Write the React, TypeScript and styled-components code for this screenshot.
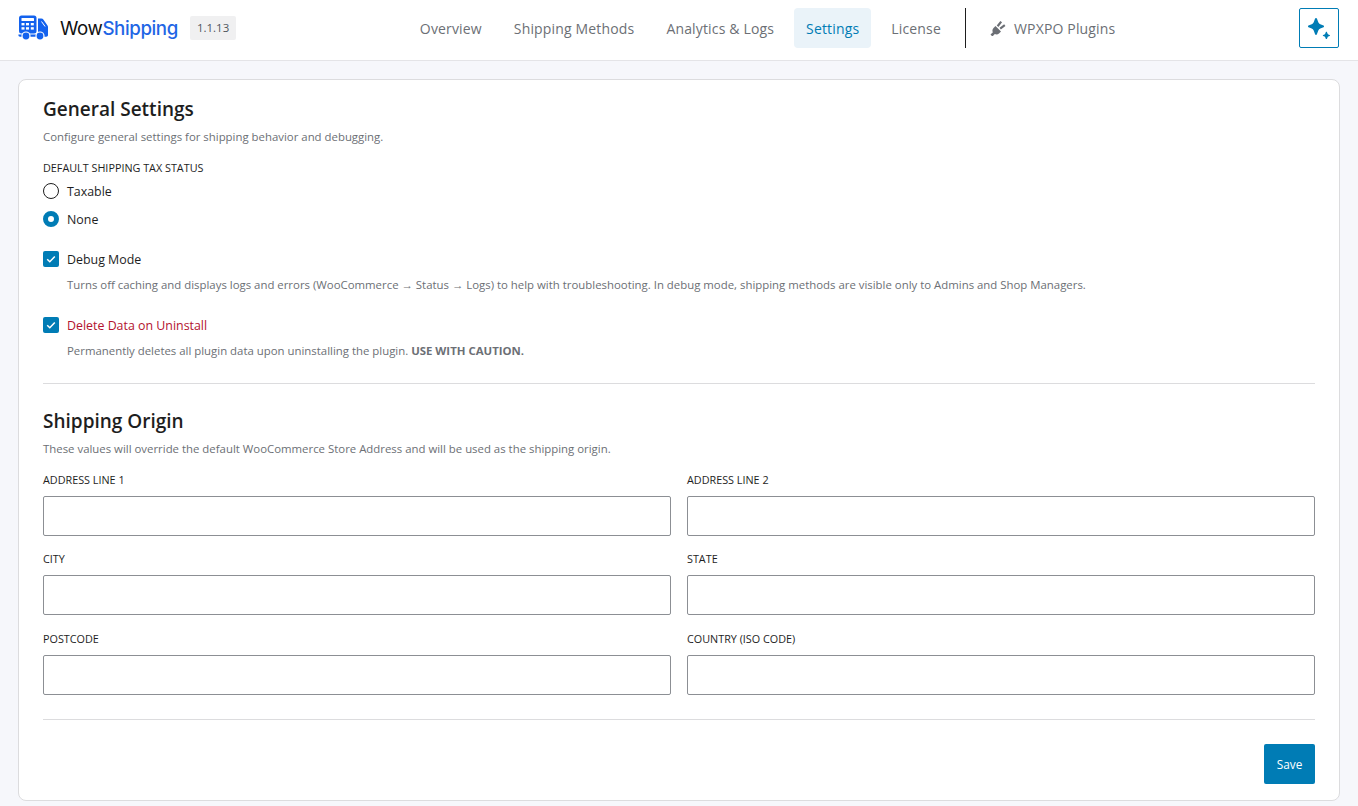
import React from 'react'
import styled, { createGlobalStyle } from 'styled-components'

const BLUE = '#007cb5'
const LOGO_BLUE = '#1362ee'

const GlobalStyle = createGlobalStyle`
  html, body {
    margin: 0;
    padding: 0;
    background: #f6f7fb;
    font-family: 'Open Sans', 'Noto Sans', sans-serif;
    color: #1e1e1e;
  }
  * {
    box-sizing: border-box;
  }
`

const Header = styled.header`
  display: flex;
  align-items: center;
  justify-content: space-between;
  height: 61px;
  padding: 8px 19px 12px 18px;
  background: #fff;
  border-bottom: 1px solid #e4e4e7;
`

const Brand = styled.div`
  display: flex;
  align-items: center;
`

const BrandName = styled.div`
  margin-left: 11px;
  font-family: Inter, sans-serif;
  font-size: 18.7px;
  font-weight: 400;
  letter-spacing: -0.4px;
  color: #111;
`

const BrandAccent = styled.span`
  color: #1f66e5;
  font-weight: 500;
`

const Version = styled.span`
  margin-left: 12px;
  padding: 0 7px;
  background: #f0f0f1;
  border-radius: 2px;
  font-size: 11.5px;
  line-height: 24px;
  color: #50575e;
`

const Nav = styled.nav`
  display: flex;
  align-items: center;
  gap: 8px;
`

const NavItem = styled.a<{ $active?: boolean }>`
  display: flex;
  align-items: center;
  gap: 8px;
  height: 40px;
  padding: 0 12px;
  border-radius: 4px;
  font-size: 14px;
  letter-spacing: 0.16px;
  color: ${p => (p.$active ? BLUE : '#6c6f75')};
  background: ${p => (p.$active ? '#eaf3f9' : 'transparent')};
`

const NavDivider = styled.div`
  width: 1px;
  height: 40px;
  margin: 0 4px;
  background: #1e1e1e;
`

const SparkleButton = styled.button`
  display: flex;
  align-items: center;
  justify-content: center;
  width: 40px;
  height: 40px;
  padding: 0;
  background: #fff;
  border: 1px solid ${BLUE};
  border-radius: 2px;
`

const Card = styled.main`
  margin: 18px 18px 0;
  padding: 17px 24px 16px;
  background: #fff;
  border: 1px solid #dcdcde;
  border-radius: 8px;
`

const SectionTitle = styled.h2`
  margin: 0;
  font-size: 19px;
  line-height: 24px;
  font-weight: 600;
  color: #1e1e1e;
`

const SectionHint = styled.p`
  margin: 8px 0 0;
  font-size: 11.4px;
  line-height: 16px;
  color: #6c6f75;
`

const FieldLabel = styled.div`
  font-size: 10.8px;
  line-height: 16px;
  font-weight: 500;
  text-transform: uppercase;
  color: #1e1e1e;
`

const TaxLabel = styled(FieldLabel)`
  margin-top: 15px;
`

const RadioRow = styled.label<{ $first?: boolean }>`
  display: flex;
  align-items: center;
  gap: 8px;
  height: 16px;
  margin-top: ${p => (p.$first ? '7px' : '12px')};
  font-size: 12.4px;
  color: #1e1e1e;
`

const RadioDot = styled.span<{ $checked?: boolean }>`
  width: 16px;
  height: 16px;
  border-radius: 50%;
  background: #fff;
  border: ${p => (p.$checked ? `5px solid ${BLUE}` : '1px solid #1e1e1e')};
`

const CheckGroup = styled.div`
  margin-top: 24px;
`

const CheckRow = styled.label<{ $danger?: boolean }>`
  display: flex;
  align-items: center;
  gap: 8px;
  height: 16px;
  font-size: 12.4px;
  color: ${p => (p.$danger ? '#b3122f' : '#1e1e1e')};
`

const CheckBox = styled.span`
  display: flex;
  align-items: center;
  justify-content: center;
  width: 16px;
  height: 16px;
  background: ${BLUE};
  border-radius: 2px;
`

const CheckHint = styled.p`
  margin: 10px 0 0 24px;
  font-size: 11.4px;
  line-height: 16px;
  color: #6c6f75;
`

const Arrow = styled.span`
  font-family: 'Liberation Sans', sans-serif;
`

const Divider = styled.hr`
  margin: 24px 0;
  border: 0;
  border-top: 1px solid #dcdcde;
`

const OriginDivider = styled(Divider)`
  margin-bottom: 25px;
`

const FieldGrid = styled.div`
  display: grid;
  grid-template-columns: 1fr 1fr;
  column-gap: 16px;
  row-gap: 15.4px;
  margin-top: 15px;
`

const Field = styled.div`
  display: flex;
  flex-direction: column;
  gap: 8px;
`

const TextInput = styled.input`
  height: 40px;
  padding: 0 12px;
  background: #fff;
  border: 1px solid #8c8f94;
  border-radius: 2px;
`

const Footer = styled.div`
  display: flex;
  justify-content: flex-end;
`

const SaveButton = styled.button`
  width: 51px;
  height: 40px;
  padding: 0;
  background: ${BLUE};
  border: 0;
  border-radius: 2px;
  font-family: inherit;
  font-size: 11.8px;
  color: #fff;
`

function TruckLogo() {
  return (
    <svg width='31' height='26' viewBox='0 0 31 26' aria-hidden='true'>
      <rect x='1' y='0.5' width='17.5' height='18' rx='2.5' fill={LOGO_BLUE} />
      <g fill='#fff'>
        <rect x='3.5' y='3' width='12.5' height='3' rx='0.6' />
        <rect x='3.5' y='8' width='3' height='2.4' />
        <rect x='8' y='8' width='3' height='2.4' />
        <rect x='12.8' y='8' width='3' height='2.4' />
        <rect x='3.5' y='12.2' width='3' height='2.4' />
        <rect x='8' y='12.2' width='3' height='2.4' />
        <rect x='12.8' y='12.2' width='3' height='2.4' />
      </g>
      <path d='M20 3.5h3.3c.9 0 1.7.4 2.2 1.2l4 5.8c.3.5.5 1 .5 1.6V20c0 1-.8 1.7-1.7 1.7H2c-1 0-1.6-.7-1.6-1.6v-.6h17.8c1 0 1.8-.8 1.8-1.8z' fill={LOGO_BLUE} />
      <path d='M23.5 6.5l3.6 5' stroke='#fff' strokeWidth='1' fill='none' />
      <circle cx='8' cy='21' r='4.6' fill='#fff' />
      <circle cx='22' cy='21' r='4.6' fill='#fff' />
      <circle cx='8' cy='21' r='3.4' fill={LOGO_BLUE} />
      <circle cx='22' cy='21' r='3.4' fill={LOGO_BLUE} />
    </svg>
  )
}

function PlugIcon() {
  return (
    <svg width='16' height='16' viewBox='0 0 16 16' aria-hidden='true'>
      <path
        d='M.5 14.6l2.4-2.4c-.8-1.5-.6-3 .6-4.2l2-2 5.5 5.5-2 2c-1.2 1.2-2.7 1.4-4.2.6l-2.4 2.4z'
        fill='#6c6f75'
      />
      <path d='M7.6 6.2l3.6-4.6M10.2 8.6l4.6-3.4' stroke='#6c6f75' strokeWidth='2.2' fill='none' />
    </svg>
  )
}

function SparkleIcon() {
  return (
    <svg width='22' height='21' viewBox='0 0 22 21' aria-hidden='true'>
      <path
        d='M8 0c.4 0 .7.3.9.6l1.4 3.6c.4.9 1.1 1.6 2 2l3.200 1.300c.3.2.5.5.5.9s-.2.7-.5.9l-3.200 1.300c-.9.4-1.600 1.100-2 2l-1.400 3.700c-.2.3-.5.6-.9.6s-.7-.3-.9-.6l-1.400-3.700c-.4-.9-1.100-1.600-2-2L.5 9.300C.2 9.100 0 8.800 0 8.400s.2-.7.5-.9l3.200-1.300c.9-.4 1.600-1.100 2-2L7.100.6C7.300.3 7.600 0 8 0z'
        fill={BLUE}
      />
      <path d='M18.400 13.700c.2 0 .4.100.5.400l.6 1.500c.2.400.4.600.8.800l1.300.6c.3.100.4.300.4.500s-.1.400-.4.500l-1.300.6c-.4.200-.6.400-.8.800l-.6 1.500c-.1.300-.3.400-.5.400s-.4-.1-.5-.4l-.6-1.500c-.2-.4-.4-.6-.8-.8l-1.300-.6c-.3-.1-.4-.3-.4-.5s.1-.4.4-.5l1.300-.6c.4-.2.6-.4.8-.8l.6-1.500c.1-.3.3-.4.5-.4z' fill={BLUE} />
    </svg>
  )
}

function CheckMark() {
  return (
    <svg width='12' height='12' viewBox='0 0 12 12' aria-hidden='true'>
      <path d='M2.2 6.3l2.6 2.5 5-5.4' stroke='#fff' strokeWidth='1.5' fill='none' />
    </svg>
  )
}

const NAV_ITEMS = ['Overview', 'Shipping Methods', 'Analytics & Logs', 'Settings', 'License']
const FIELDS = ['Address Line 1', 'Address Line 2', 'City', 'State', 'Postcode', 'Country (ISO Code)']

export default function App() {
  return (
    <>
      <GlobalStyle />
      <Header>
        <Brand>
          <TruckLogo />
          <BrandName>
            Wow<BrandAccent>Shipping</BrandAccent>
          </BrandName>
          <Version>1.1.13</Version>
        </Brand>
        <Nav>
          {NAV_ITEMS.map(item => (
            <NavItem key={item} $active={item === 'Settings'}>
              {item}
            </NavItem>
          ))}
          <NavDivider />
          <NavItem>
            <PlugIcon />
            WPXPO Plugins
          </NavItem>
        </Nav>
        <SparkleButton aria-label='Assistant'>
          <SparkleIcon />
        </SparkleButton>
      </Header>
      <Card>
        <SectionTitle>General Settings</SectionTitle>
        <SectionHint>Configure general settings for shipping behavior and debugging.</SectionHint>
        <TaxLabel>Default Shipping Tax Status</TaxLabel>
        <RadioRow $first>
          <RadioDot />
          Taxable
        </RadioRow>
        <RadioRow>
          <RadioDot $checked />
          None
        </RadioRow>
        <CheckGroup>
          <CheckRow>
            <CheckBox>
              <CheckMark />
            </CheckBox>
            Debug Mode
          </CheckRow>
          <CheckHint>
            Turns off caching and displays logs and errors (WooCommerce <Arrow>→</Arrow> Status <Arrow>→</Arrow> Logs) to help with
            troubleshooting. In debug mode, shipping methods are visible only to Admins and Shop Managers.
          </CheckHint>
        </CheckGroup>
        <CheckGroup>
          <CheckRow $danger>
            <CheckBox>
              <CheckMark />
            </CheckBox>
            Delete Data on Uninstall
          </CheckRow>
          <CheckHint>
            Permanently deletes all plugin data upon uninstalling the plugin. <b>USE WITH CAUTION.</b>
          </CheckHint>
        </CheckGroup>
        <OriginDivider />
        <SectionTitle>Shipping Origin</SectionTitle>
        <SectionHint>
          These values will override the default WooCommerce Store Address and will be used as the shipping origin.
        </SectionHint>
        <FieldGrid>
          {FIELDS.map(field => (
            <Field key={field}>
              <FieldLabel>{field}</FieldLabel>
              <TextInput aria-label={field} />
            </Field>
          ))}
        </FieldGrid>
        <Divider />
        <Footer>
          <SaveButton>Save</SaveButton>
        </Footer>
      </Card>
    </>
  )
}
